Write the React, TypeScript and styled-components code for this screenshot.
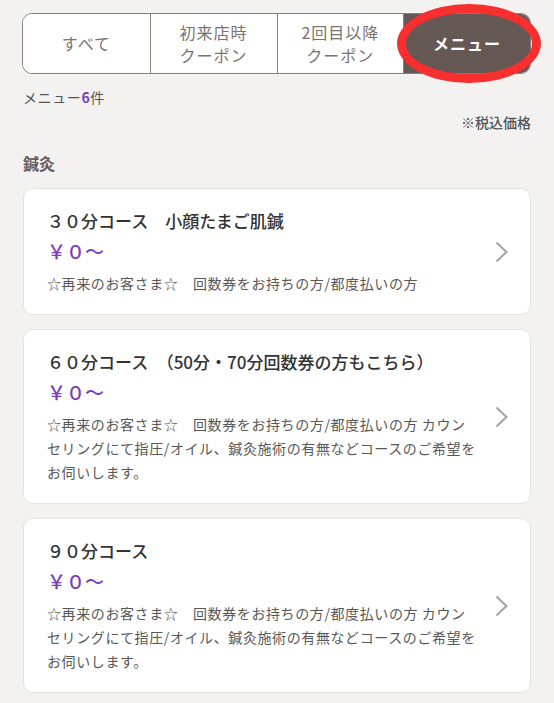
import React from 'react'
import styled, { createGlobalStyle } from 'styled-components'

type MenuItem = { title: string; price: string; desc: string }

const menus: MenuItem[] = [
  {
    title: '３０分コース　小顔たまご肌鍼',
    price: '￥０〜',
    desc: '☆再来のお客さま☆　回数券をお持ちの方/都度払いの方',
  },
  {
    title: '６０分コース　（50分・70分回数券の方もこちら）',
    price: '￥０〜',
    desc: '☆再来のお客さま☆　回数券をお持ちの方/都度払いの方 カウン\nセリングにて指圧/オイル、鍼灸施術の有無などコースのご希望を\nお伺いします。',
  },
  {
    title: '９０分コース',
    price: '￥０〜',
    desc: '☆再来のお客さま☆　回数券をお持ちの方/都度払いの方 カウン\nセリングにて指圧/オイル、鍼灸施術の有無などコースのご希望を\nお伺いします。',
  },
]

const tabs = [
  { label: 'すべて' },
  { label: '初来店時\nクーポン' },
  { label: '2回目以降\nクーポン' },
  { label: 'メニュー', active: true },
]

const GlobalStyle = createGlobalStyle`
  html, body {
    margin: 0;
    padding: 0;
    background: #f3f2f0;
    font-family: "Noto Sans CJK JP", "Noto Sans", sans-serif;
    overflow: hidden;
  }
`

const Page = styled('div')`
  position: relative;
  height: 703px;
  overflow: hidden;
  padding: 13px 23px 0 22px;
  box-sizing: border-box;
`

const TabBar = styled('div')`
  display: grid;
  grid-template-columns: repeat(4, 1fr);
  height: 61px;
  border: 1.5px solid #8b7f7d;
  border-radius: 10px;
  overflow: hidden;
  background: #fff;
  box-sizing: border-box;
`

const Tab = styled('div')<{ $active?: boolean }>`
  display: flex;
  align-items: center;
  justify-content: center;
  text-align: center;
  white-space: pre-line;
  font-size: 16px;
  line-height: 23px;
  letter-spacing: 1px;
  color: ${p => (p.$active ? '#fff' : '#7b7272')};
  font-weight: ${p => (p.$active ? 700 : 400)};
  background: ${p => (p.$active ? '#655855' : '#fff')};
  &:not(:first-child) {
    border-left: 1.5px solid #8b7f7d;
  }
`

// red annotation ring drawn over the active tab
const Highlight = styled('div')`
  position: absolute;
  left: 397px;
  top: 4px;
  width: 144px;
  height: 79px;
  border: 9px solid #f72f2f;
  border-radius: 50%;
  box-sizing: border-box;
  pointer-events: none;
`

const Count = styled('p')`
  margin: 13px 0 0 1px;
  font-size: 14px;
  line-height: 20px;
  letter-spacing: 0.6px;
  color: #555;
  b {
    color: #7b3db8;
    font-weight: 700;
  }
`

const TaxNote = styled('p')`
  margin: 5px 0 0;
  text-align: right;
  font-size: 14px;
  line-height: 20px;
  font-weight: 500;
  color: #555;
`

const Category = styled('h2')`
  margin: 20px 0 0 1px;
  font-size: 16px;
  line-height: 22px;
  font-weight: 700;
  color: #6a5c5a;
`

const CardList = styled('div')`
  display: flex;
  flex-direction: column;
  gap: 14px;
  margin-top: 14px;
  padding-left: 1px;
`

const Card = styled('div')`
  display: flex;
  align-items: center;
  background: #fff;
  border: 1px solid #e6e3e1;
  border-radius: 10px;
  padding: 20px 0 19px 23px;
`

// top edge of the next card, scrolled just into view
const NextCard = styled('div')`
  height: 40px;
  background: #fff;
  border: 1px solid #e6e3e1;
  border-radius: 10px;
`

const CardBody = styled('div')`
  flex: 1;
  min-width: 0;
`

const Title = styled('div')`
  font-size: 17px;
  line-height: 24px;
  font-weight: 500;
  color: #333;
`

const Price = styled('div')`
  margin-top: 4px;
  font-size: 19px;
  line-height: 28px;
  font-weight: 500;
  color: #7b3db8;
`

const Desc = styled('div')`
  margin-top: 6px;
  font-size: 14px;
  line-height: 24px;
  letter-spacing: 0.6px;
  color: #585858;
  white-space: pre-line;
`

const Arrow = styled('div')`
  flex: 0 0 52px;
  display: flex;
  justify-content: center;
  padding-right: 6px;
  box-sizing: border-box;
`

const Chevron = () => (
  <svg width="13" height="22" viewBox="0 0 13 22">
    <polyline points="1.5,1.5 11.5,11 1.5,20.5" fill="none" stroke="#a3a3a3" strokeWidth="2" />
  </svg>
)

export default function App() {
  return (
    <>
      <GlobalStyle />
      <Page>
        <TabBar>
          {tabs.map(t => (
            <Tab key={t.label} $active={t.active}>
              {t.label}
            </Tab>
          ))}
        </TabBar>
        <Highlight />
        <Count>
          メニュー<b>6</b>件
        </Count>
        <TaxNote>※税込価格</TaxNote>
        <Category>鍼灸</Category>
        <CardList>
          {menus.map(m => (
            <Card key={m.title}>
              <CardBody>
                <Title>{m.title}</Title>
                <Price>{m.price}</Price>
                <Desc>{m.desc}</Desc>
              </CardBody>
              <Arrow>
                <Chevron />
              </Arrow>
            </Card>
          ))}
          <NextCard />
        </CardList>
      </Page>
    </>
  )
}
